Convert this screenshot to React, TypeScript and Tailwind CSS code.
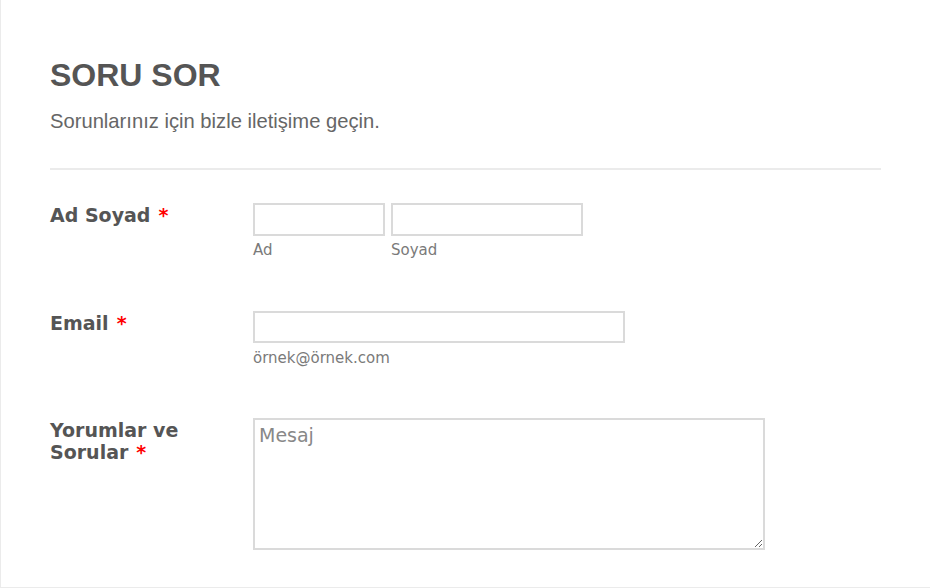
import React from 'react';

const labelFont = { fontFamily: '"DejaVu Sans", Verdana, sans-serif' };

const Required: React.FC = () => (
  <span className="text-[#f00] ml-[8px]">*</span>
);

const App: React.FC = () => {
  return (
    <div className="w-[930px] h-[588px] bg-white border-l border-b border-[#ebebeb] overflow-hidden">
      <div className="pl-[49px] pr-[49px] pt-[59px]">
        {/* Header */}
        <h1
          className="text-[32px] leading-[32px] font-bold text-[#555]"
          style={{ fontFamily: '"Liberation Sans", Arial, sans-serif' }}
        >
          SORU SOR
        </h1>
        <p
          className="mt-[20px] text-[20.2px] leading-[20px] text-[#666]"
          style={{ fontFamily: '"Liberation Sans", Arial, sans-serif' }}
        >
          Sorunlarınız için bizle iletişime geçin.
        </p>
        <div className="mt-[37px] border-t-2 border-[#ebebeb]" />

        {/* Form rows */}
        <div className="mt-[33px] flex flex-col" style={labelFont}>
          <div className="flex">
            <div className="w-[203px] shrink-0 pt-[1px] text-[19px] leading-[22px] font-bold text-[#555]">
              Ad Soyad<Required />
            </div>
            <div className="flex gap-[6px]">
              <div className="flex flex-col">
                <input className="w-[132px] h-[33px] border-2 border-[#dadada] bg-white outline-none" />
                <span className="mt-[6px] text-[15px] leading-[16px] text-[#7a7a7a]">Ad</span>
              </div>
              <div className="flex flex-col">
                <input className="w-[192px] h-[33px] border-2 border-[#dadada] bg-white outline-none" />
                <span className="mt-[6px] text-[15px] leading-[16px] text-[#7a7a7a]">Soyad</span>
              </div>
            </div>
          </div>

          <div className="flex mt-[53px]">
            <div className="w-[203px] shrink-0 pt-[1px] text-[19px] leading-[22px] font-bold text-[#555]">
              Email<Required />
            </div>
            <div className="flex flex-col">
              <input className="w-[372px] h-[32px] border-2 border-[#dadada] bg-white outline-none" />
              <span className="mt-[7px] text-[15px] leading-[16px] text-[#7a7a7a]">örnek@örnek.com</span>
            </div>
          </div>

          <div className="flex mt-[52px]">
            <div className="w-[203px] shrink-0 pt-[1px] text-[19px] leading-[22px] font-bold text-[#555]">
              <div>Yorumlar ve</div>
              <div>
                Sorular<Required />
              </div>
            </div>
            <textarea
              placeholder="Mesaj"
              className="w-[512px] h-[132px] border-2 border-[#dadada] bg-white px-[4px] py-[4px] text-[19px] leading-[22px] text-[#555] placeholder:text-[#888] outline-none"
              style={labelFont}
            />
          </div>
        </div>
      </div>
    </div>
  );
};

export default App;
